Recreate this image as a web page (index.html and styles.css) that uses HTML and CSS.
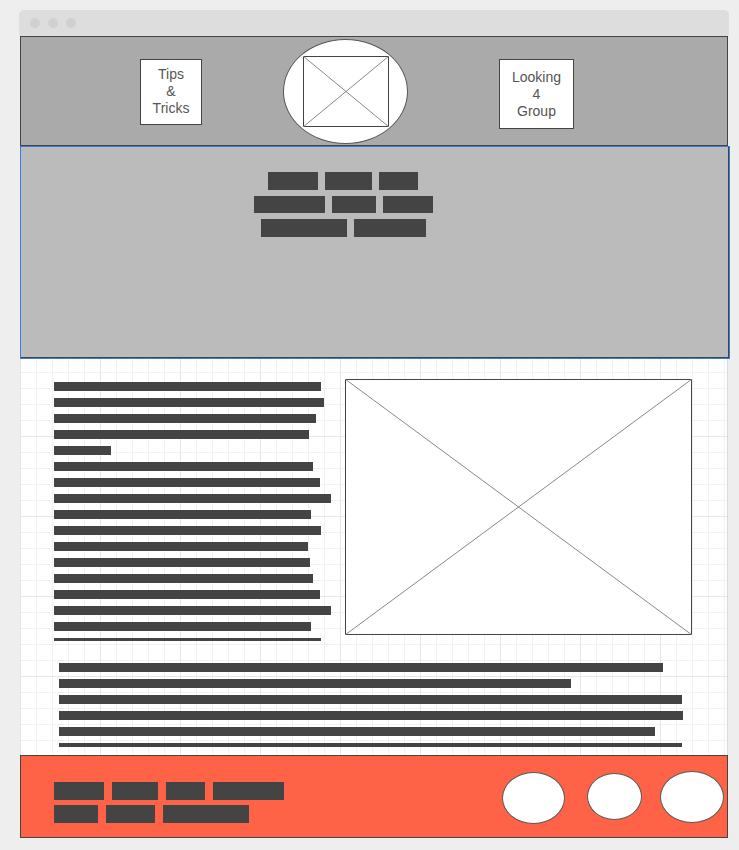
FILE: index.html
```html
<!DOCTYPE html>
<html lang="en">
  <head>
    <meta charset="UTF-8" />
    <meta name="viewport" content="width=device-width, initial-scale=1.0" />
    <title>Gaming Site Wireframe</title>
    <link rel="stylesheet" href="styles.css">
  </head>
  <body>
    <div class="window">
      <!-- Window chrome -->
      <div class="titlebar">
        <span class="dot"></span>
        <span class="dot"></span>
        <span class="dot"></span>
      </div>

      <div class="page">
        <!-- Header with nav boxes and logo -->
        <div class="header">
          <div class="nav-box tips">Tips<br />&amp;<br />Tricks</div>
          <div class="logo">
            <svg class="placeholder logo-img" viewBox="0 0 86 71" preserveAspectRatio="none">
              <rect x="0.5" y="0.5" width="85" height="70" fill="#fff" stroke="#444" />
              <line x1="0" y1="0" x2="86" y2="71" stroke="#888" />
              <line x1="86" y1="0" x2="0" y2="71" stroke="#888" />
            </svg>
          </div>
          <div class="nav-box lfg">Looking<br />4<br />Group</div>
        </div>

        <!-- Hero -->
        <div class="hero">
          <div class="hero-words">
            <div class="word-row">
              <span class="word" style="width: 50px"></span>
              <span class="word" style="width: 47px"></span>
              <span class="word" style="width: 39px"></span>
            </div>
            <div class="word-row short">
              <span class="word" style="width: 71px"></span>
              <span class="word" style="width: 44px"></span>
              <span class="word" style="width: 50px"></span>
            </div>
            <div class="word-row">
              <span class="word" style="width: 86px"></span>
              <span class="word" style="width: 72px"></span>
            </div>
          </div>
        </div>

        <!-- Main content -->
        <div class="content">
          <div class="content-top">
            <div class="text-col">
              <span class="line" style="width: 267px"></span>
              <span class="line" style="width: 270px"></span>
              <span class="line" style="width: 262px"></span>
              <span class="line" style="width: 255px"></span>
              <span class="line" style="width: 57px"></span>
              <span class="line" style="width: 259px"></span>
              <span class="line" style="width: 266px"></span>
              <span class="line" style="width: 277px"></span>
              <span class="line" style="width: 257px"></span>
              <span class="line" style="width: 267px"></span>
              <span class="line" style="width: 254px"></span>
              <span class="line" style="width: 256px"></span>
              <span class="line" style="width: 259px"></span>
              <span class="line" style="width: 266px"></span>
              <span class="line" style="width: 277px"></span>
              <span class="line" style="width: 257px"></span>
              <span class="line" style="width: 267px"></span>
            </div>
            <svg class="placeholder main-img" viewBox="0 0 347 256" preserveAspectRatio="none">
              <rect x="0.5" y="0.5" width="346" height="255" fill="#fff" stroke="#444" />
              <line x1="0" y1="0" x2="347" y2="256" stroke="#888" />
              <line x1="347" y1="0" x2="0" y2="256" stroke="#888" />
            </svg>
          </div>
          <div class="text-wide">
            <span class="line" style="width: 604px"></span>
            <span class="line" style="width: 512px"></span>
            <span class="line" style="width: 623px"></span>
            <span class="line" style="width: 624px"></span>
            <span class="line" style="width: 596px"></span>
            <span class="line" style="width: 623px"></span>
          </div>
        </div>

        <!-- Footer -->
        <div class="footer">
          <div class="footer-links">
            <div class="word-row">
              <span class="word" style="width: 50px"></span>
              <span class="word" style="width: 46px"></span>
              <span class="word" style="width: 39px"></span>
              <span class="word" style="width: 71px"></span>
            </div>
            <div class="word-row">
              <span class="word" style="width: 44px"></span>
              <span class="word" style="width: 49px"></span>
              <span class="word" style="width: 86px"></span>
            </div>
          </div>
          <div class="socials">
            <span class="social s1"></span>
            <span class="social s2"></span>
            <span class="social s3"></span>
          </div>
        </div>
      </div>
    </div>
  </body>
</html>
```

FILE: styles.css
```css
* {
  box-sizing: border-box;
  margin: 0;
  padding: 0;
}
body {
  background: #eeeeee;
  font-family: "Liberation Sans", Arial, sans-serif;
  height: 850px;
  overflow: hidden;
}
.window {
  width: 710px;
  margin: 10px 0 0 19px;
}
.titlebar {
  height: 26px;
  background: #dddddd;
  border-radius: 5px 5px 0 0;
  display: flex;
  align-items: center;
  gap: 8px;
  padding-left: 11px;
}
.dot {
  width: 10px;
  height: 10px;
  border-radius: 50%;
  background: #d0d0d0;
}
.page {
  width: 708px;
  margin-left: 1px;
}
.placeholder {
  display: block;
}

/* header */
.header {
  height: 110px;
  background: #aaaaaa;
  border: 1px solid #444;
  display: flex;
  align-items: flex-start;
  padding: 22px 0 0 119px;
}
.nav-box {
  background: #fff;
  border: 1px solid #444;
  color: #555;
  font-size: 14px;
  line-height: 17px;
  text-align: center;
  display: flex;
  align-items: center;
  justify-content: center;
}
.tips {
  width: 62px;
  height: 66px;
  padding-bottom: 2px;
}
.lfg {
  width: 75px;
  height: 70px;
  margin-left: 91px;
}
.logo {
  width: 125px;
  height: 105px;
  margin: -20px 0 0 81px;
  background: #fff;
  border: 1px solid #555;
  border-radius: 50%;
  display: flex;
  align-items: center;
  justify-content: center;
}
.logo-img {
  width: 86px;
  height: 71px;
}

/* hero */
.hero {
  width: 710px;
  height: 213px;
  background: #bbbbbb;
  border: 1px solid #3b7ddd;
  box-shadow: inset -1px -1px 0 #444;
  padding: 25px 0 0 232px;
}
.hero-words {
  width: 180px;
  display: flex;
  flex-direction: column;
  gap: 6px;
}
.hero-words .word-row {
  justify-content: center;
  gap: 7px;
}
.word-row {
  display: flex;
  gap: 8px;
  height: 18px;
}
.word-row.short {
  height: 17px;
}
.word {
  display: block;
  height: 100%;
  background: #444;
}

/* grid content */
.content {
  height: 396px;
  overflow: hidden;
  border-right: 1px solid #dcdcdc;
  background-color: #fff;
  background-image:
    linear-gradient(to right, #e6e6e6 1px, transparent 1px),
    linear-gradient(to bottom, #e6e6e6 1px, transparent 1px),
    linear-gradient(to right, #f1f1f1 1px, transparent 1px),
    linear-gradient(to bottom, #f1f1f1 1px, transparent 1px);
  background-size: 80px 80px, 80px 80px, 16px 16px, 16px 16px;
  background-position: 0 0, 0 -3px, 0 0, 0 -3px;
  padding: 20px 0 0 34px;
}
.content-top {
  display: flex;
  align-items: flex-start;
  gap: 14px;
}
.text-col {
  width: 277px;
  height: 259px;
  margin-top: 3px;
  overflow: hidden;
  display: flex;
  flex-direction: column;
  gap: 7px;
}
.line {
  display: block;
  flex-shrink: 0;
  height: 9px;
  background: #444;
}
.main-img {
  width: 347px;
  height: 256px;
}
.text-wide {
  height: 84px;
  margin: 22px 0 0 5px;
  overflow: hidden;
  display: flex;
  flex-direction: column;
  gap: 7px;
}

/* footer */
.footer {
  height: 83px;
  background: #ff6347;
  border: 1px solid #444;
  display: flex;
  align-items: center;
  padding: 0 3px 0 33px;
}
.footer-links {
  align-self: flex-start;
  display: flex;
  flex-direction: column;
  gap: 5px;
  margin-top: 26px;
}
.socials {
  margin-left: auto;
  display: flex;
  align-items: center;
}
.social {
  display: block;
  background: #fff;
  border: 1px solid #5a5a5a;
  border-radius: 50%;
}
.s1 {
  width: 63px;
  height: 52px;
  margin-top: 3px;
}
.s2 {
  width: 55px;
  height: 47px;
  margin-left: 22px;
}
.s3 {
  width: 64px;
  height: 52px;
  margin-left: 18px;
}
```
